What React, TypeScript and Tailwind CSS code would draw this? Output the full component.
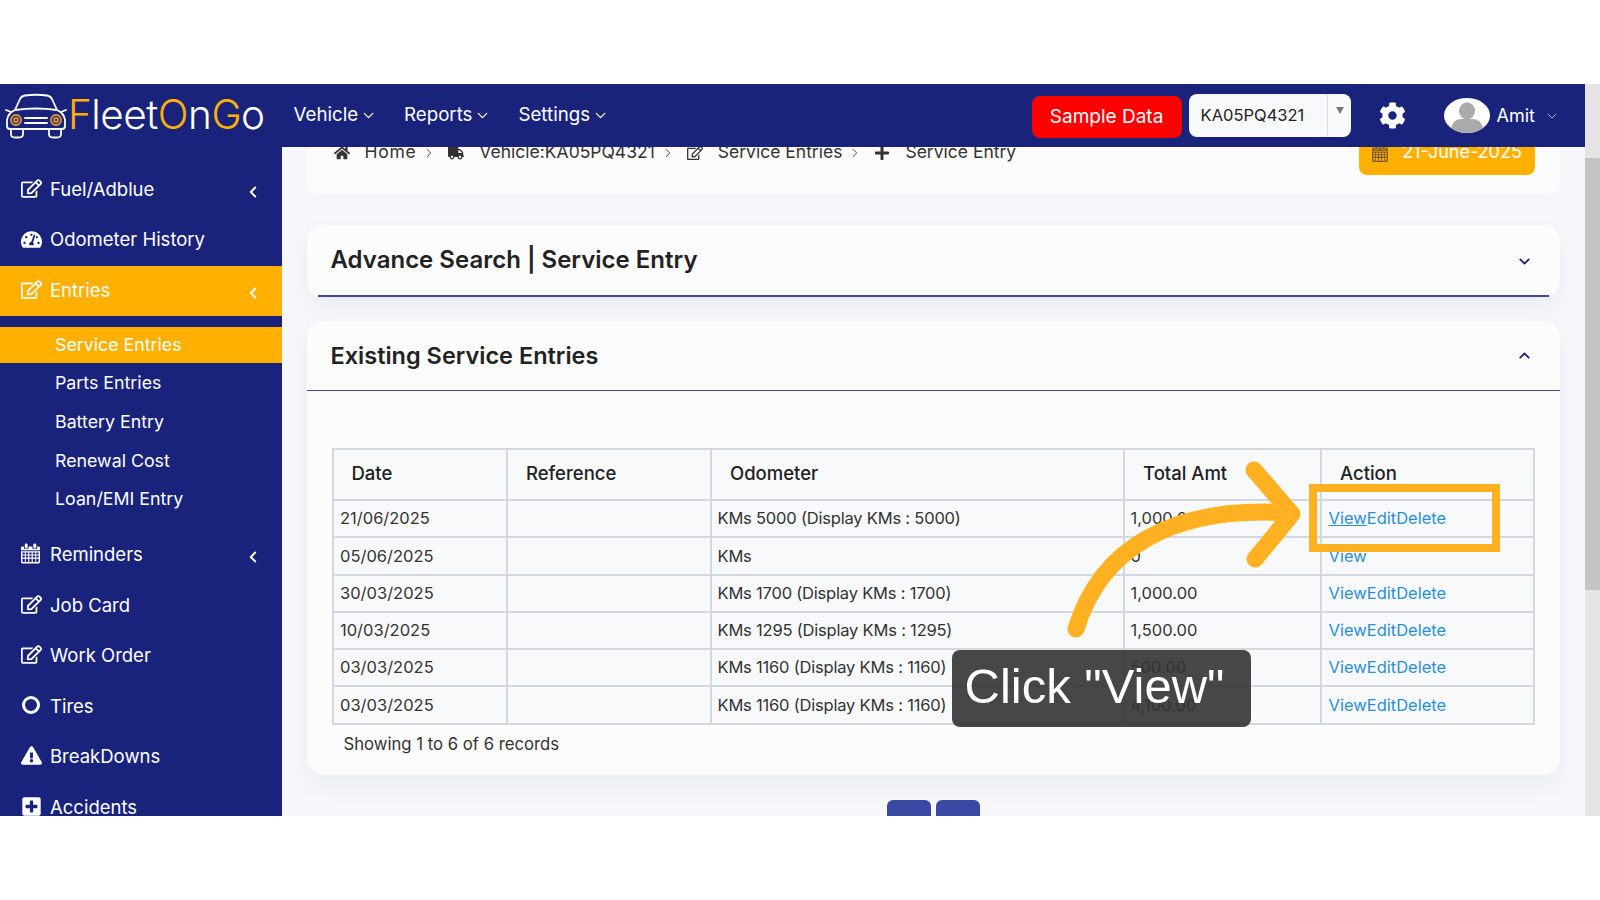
import { ChevronDown, ChevronLeft, ChevronRight, ChevronUp } from 'lucide-react'
import {
  FaCog,
  FaExclamationTriangle,
  FaHome,
  FaPlus,
  FaPlusSquare,
  FaRegEdit,
  FaTachometerAlt,
  FaTruck,
} from 'react-icons/fa'
import type { ReactNode } from 'react'

const rows = [
  { date: '21/06/2025', odo: 'KMs 5000 (Display KMs : 5000)', total: '1,000.00', full: true, active: true },
  { date: '05/06/2025', odo: 'KMs', total: '0', full: false, active: false },
  { date: '30/03/2025', odo: 'KMs 1700 (Display KMs : 1700)', total: '1,000.00', full: true, active: false },
  { date: '10/03/2025', odo: 'KMs 1295 (Display KMs : 1295)', total: '1,500.00', full: true, active: false },
  { date: '03/03/2025', odo: 'KMs 1160 (Display KMs : 1160)', total: '500.00', full: true, active: false },
  { date: '03/03/2025', odo: 'KMs 1160 (Display KMs : 1160)', total: '4,100.00', full: true, active: false },
]

function CarLogo() {
  return (
    <svg viewBox="0 0 62 46" className="h-[46px] w-[62px] shrink-0" fill="none" stroke="#fff" strokeWidth="1.8" strokeLinecap="round" strokeLinejoin="round">
      <path d="M10 17 L15 6 Q16.500 3 20 2.500 Q31 1 42 2.500 Q45.500 3 47 6 L52 17" />
      <path d="M10 17 Q3 20 2 27 L2 33 Q2 36 5 36 L57 36 Q60 36 60 33 L60 27 Q59 20 52 17 Q31 14 10 17 Z" />
      <path d="M6 36 L6 41 Q6 44.500 10 44.500 L14 44.500 Q18 44.500 18 41 L18 36" />
      <path d="M44 36 L44 41 Q44 44.500 48 44.500 L52 44.500 Q56 44.500 56 41 L56 36" />
      <path d="M1 17 L6 19 M61 17 L56 19" />
      <path d="M20 25 L42 25 M20 30 L42 30" />
      <circle cx="11" cy="27" r="5" stroke="#e0962a" strokeDasharray="1.500 1" />
      <circle cx="11" cy="27" r="2" stroke="#e0962a" />
      <circle cx="51" cy="27" r="5" stroke="#e0962a" strokeDasharray="1.500 1" />
      <circle cx="51" cy="27" r="2" stroke="#e0962a" />
    </svg>
  )
}

// fa-calendar from the old icon font: rings on top, grid of cells below
function CalendarGrid({ className }: { className?: string }) {
  return (
    <svg viewBox="0 0 20 21" className={className} fill="currentColor">
      <rect x="4" y="0" width="3" height="5" rx="1.200" />
      <rect x="13" y="0" width="3" height="5" rx="1.200" />
      <path d="M1.500 3 H3 V5.500 H8 V3 H12 V5.500 H17 V3 H18.500 Q20 3 20 4.500 V7 H0 V4.500 Q0 3 1.500 3 Z" />
      <path fillRule="evenodd" d="M0 8 H20 V19.500 Q20 21 18.500 21 H1.500 Q0 21 0 19.500 Z M1.500 9.500 V11.500 H4 V9.500 Z M5 9.500 V11.500 H7.500 V9.500 Z M8.700 9.500 V11.500 H11.200 V9.500 Z M12.400 9.500 V11.500 H15 V9.500 Z M16 9.500 V11.500 H18.500 V9.500 Z M1.500 12.700 V14.700 H4 V12.700 Z M5 12.700 V14.700 H7.500 V12.700 Z M8.700 12.700 V14.700 H11.200 V12.700 Z M12.400 12.700 V14.700 H15 V12.700 Z M16 12.700 V14.700 H18.500 V12.700 Z M1.500 16 V18 Q1.500 19.500 2.500 19.500 H4 V16 Z M5 16 V19.500 H7.500 V16 Z M8.700 16 V19.500 H11.200 V16 Z M12.400 16 V19.500 H15 V16 Z M16 16 V19.500 H17.500 Q18.500 19.500 18.500 18 V16 Z" />
    </svg>
  )
}

function NavLink({ label }: { label: string }) {
  return (
    <div className="flex items-center gap-[2px] text-[18.7px] text-white">
      {label}
      <ChevronDown className="h-[17px] w-[17px]" strokeWidth={1.8} />
    </div>
  )
}

function SideItem({ icon, label, arrow, active }: { icon: ReactNode; label: string; arrow?: boolean; active?: boolean }) {
  return (
    <div className={`flex h-[50.500px] items-center pl-[21px] pr-[20px] text-[18.500px] text-white ${active ? 'bg-[#ffb000]' : ''}`}>
      <span className="flex w-[29px] shrink-0 -translate-y-[1px] text-[21px]">{icon}</span>
      <span className="flex-1">{label}</span>
      {arrow && <ChevronLeft className="mt-1 h-[18px] w-[18px]" strokeWidth={2.5} />}
    </div>
  )
}

function SubItem({ label, active }: { label: string; active?: boolean }) {
  return (
    <div className={`flex items-center pl-[55px] text-[17.800px] text-white ${active ? 'mb-[1px] h-[36px] bg-[#ffb000]' : 'h-[38.800px]'}`}>
      {label}
    </div>
  )
}

function Crumb({ icon, label, last, spaced }: { icon: ReactNode; label: string; last?: boolean; spaced?: boolean }) {
  return (
    <div className="flex items-center">
      <span className="flex w-[31px] shrink-0 text-[16px]">{icon}</span>
      <span className={spaced ? 'tracking-[0.7px]' : ''}>{label}</span>
      {!last && <ChevronRight className="ml-[6px] mr-[12px] h-[14px] w-[14px]" strokeWidth={1.5} />}
    </div>
  )
}

function Sidebar() {
  return (
    <aside className="h-full w-[281.500px] shrink-0 overflow-hidden bg-[#19237c] pt-[17.500px]">
      <SideItem icon={<FaRegEdit />} label="Fuel/Adblue" arrow />
      <SideItem icon={<FaTachometerAlt />} label="Odometer History" />
      <SideItem icon={<FaRegEdit />} label="Entries" arrow active />
      <div className="mb-[10.500px] mt-[11px]">
        <SubItem label="Service Entries" active />
        <SubItem label="Parts Entries" />
        <SubItem label="Battery Entry" />
        <SubItem label="Renewal Cost" />
        <SubItem label="Loan/EMI Entry" />
      </div>
      <SideItem icon={<CalendarGrid className="h-[21px] w-[19px]" />} label="Reminders" arrow />
      <SideItem icon={<FaRegEdit />} label="Job Card" />
      <SideItem icon={<FaRegEdit />} label="Work Order" />
      <SideItem icon={<span className="ml-[1px] h-[18px] w-[18px] rounded-full border-[3.500px] border-white" />} label="Tires" />
      <SideItem icon={<FaExclamationTriangle />} label="BreakDowns" />
      <SideItem icon={<FaPlusSquare />} label="Accidents" />
    </aside>
  )
}

function TopNav() {
  return (
    <header className="flex h-[63px] shrink-0 items-center bg-[#19237c]">
      <div className="ml-[5px] flex items-center">
        <CarLogo />
        <div className="ml-[1px] text-[40.5px] font-light leading-none tracking-[-0.5px] text-white">
          <span className="text-[#ffb000]">F</span>leet<span className="text-[#ffb000]">O</span>n<span className="text-[#ffb000]">G</span>o
        </div>
      </div>
      <div className="ml-[29px] flex items-center gap-[27px]">
        <NavLink label="Vehicle" />
        <NavLink label="Reports" />
        <NavLink label="Settings" />
      </div>
      <div className="ml-auto mt-[3px] flex h-[42px] w-[150px] items-center justify-center rounded-lg bg-[#ff0000] text-[19px] text-white">
        Sample Data
      </div>
      <div className="ml-[7px] flex h-[43px] w-[162px] items-center rounded-lg bg-[#f8f9fb]">
        <span className="flex-1 pl-[12px] text-[16.5px] text-[#222]">KA05PQ4321</span>
        <div className="flex h-full w-[24px] items-start justify-center border-l border-[#d9dce3] pl-[2px] pt-[13px]">
          <span className="h-0 w-0 border-x-[4px] border-t-[7px] border-x-transparent border-t-[#777]" />
        </div>
      </div>
      <FaCog className="ml-[28px] text-[27px] text-white" />
      <svg viewBox="0 0 46 35" preserveAspectRatio="none" className="ml-[38px] h-[35px] w-[46px] shrink-0">
        <ellipse cx="23" cy="17.500" rx="23" ry="17.500" fill="#fff" />
        <ellipse cx="23" cy="13" rx="8" ry="8.500" fill="#aaa" />
        <path d="M7 30 Q9 21 18 21 L28 21 Q37 21 39 30 Q32 35 23 35 Q14 35 7 30 Z" fill="#aaa" />
      </svg>
      <span className="ml-[7px] text-[18px] text-white">Amit</span>
      <ChevronDown className="ml-[9px] mr-[25px] h-4 w-4 text-[#aab0d8]" strokeWidth={1.5} />
    </header>
  )
}

function EntriesTable() {
  return (
    <table className="w-[1203.500px] table-fixed border-collapse bg-[#f8f9fb] text-[16.500px] text-[#333]">
      <colgroup>
        <col className="w-[174.500px]" />
        <col className="w-[204px]" />
        <col className="w-[413px]" />
        <col className="w-[197px]" />
        <col />
      </colgroup>
      <thead>
        <tr className="h-[51.500px] text-left text-[18.500px] font-medium text-[#222]">
          <th className="border-2 border-[#d3d7e0] pl-[18px] font-medium">Date</th>
          <th className="border-2 border-[#d3d7e0] pl-[18px] font-medium">Reference</th>
          <th className="border-2 border-[#d3d7e0] pl-[18px] font-medium">Odometer</th>
          <th className="border-2 border-[#d3d7e0] pl-[18px] font-medium">Total Amt</th>
          <th className="border-2 border-[#d3d7e0] pl-[18px] font-medium">Action</th>
        </tr>
      </thead>
      <tbody>
        {rows.map((row, i) => (
          <tr key={i} className="h-[37.300px]">
            <td className="border-2 border-[#d3d7e0] pl-[6.500px]">{row.date}</td>
            <td className="border-2 border-[#d3d7e0]" />
            <td className="border-2 border-[#d3d7e0] pl-[5.500px] tracking-[-0.2px]">{row.odo}</td>
            <td className="border-2 border-[#d3d7e0] pl-[5.500px]">{row.total}</td>
            <td className="border-2 border-[#d3d7e0] pl-[6.500px] text-[#2a8fd8]">
              <span className={row.active ? 'underline' : ''}>View</span>
              {row.full && 'EditDelete'}
            </td>
          </tr>
        ))}
      </tbody>
    </table>
  )
}

function Overlays() {
  return (
    <>
      <svg viewBox="0 0 1600 900" className="pointer-events-none absolute left-0 top-0 h-[900px] w-[1600px]" fill="none" stroke="#ffb122" strokeLinecap="round" strokeLinejoin="round">
        <path d="M1076 629 C1100 550 1170 505 1290 513" strokeWidth="17" />
        <path d="M1254 470 L1292 514 L1255 559" strokeWidth="17" />
      </svg>
      <div className="absolute left-[1309px] top-[484px] h-[68px] w-[191px] border-8 border-[#ffb122]" />
      <div className="absolute left-[952px] top-[650px] flex h-[77px] w-[299px] items-center justify-center rounded-lg bg-[#333333]/90 pb-[5px] pr-[14px] font-['Liberation_Sans',sans-serif] text-[49px] leading-none text-white">
        Click "View"
      </div>
    </>
  )
}

export default function App() {
  return (
    <div className="relative h-[900px] w-[1600px] overflow-hidden bg-white font-['Inter',sans-serif]">
      <div className="h-[84px]" />
      <div className="flex h-[732px]">
        <div className="flex min-w-0 flex-1 flex-col">
          <TopNav />
          <div className="flex min-h-0 flex-1">
            <Sidebar />
            <main className="min-w-0 flex-1 overflow-hidden bg-[#f6f7fa] px-[25px]">
              <div className="relative z-0 -mt-[40px] flex h-[87px] items-start justify-between rounded-xl bg-[#fcfcfd] pl-[27px] pr-[25px] pt-[33px] text-[17.500px] text-[#333]">
                <div className="flex h-[25px] items-center">
                  <Crumb icon={<FaHome />} label="Home" spaced />
                  <Crumb icon={<FaTruck />} label="Vehicle:KA05PQ4321" />
                  <Crumb icon={<FaRegEdit />} label="Service Entries" />
                  <Crumb icon={<FaPlus />} label="Service Entry" last />
                </div>
                <div className="-mt-[33px] flex h-[68px] w-[176px] items-end justify-center gap-[14px] rounded-b-lg bg-[#ffb000] pb-[10px] text-[18px] text-white">
                  <CalendarGrid className="mb-[3px] h-[17px] w-[16px] text-[#7a5a2a]" />
                  21-June-2025
                </div>
              </div>

              <section className="mt-[31px] rounded-2xl bg-[#fcfcfd] shadow-[0_10px_24px_rgba(30,40,90,0.05)]">
                <div className="flex h-[70px] items-center justify-between pl-[24px] pr-[27px] text-[24px] font-semibold text-[#222]">
                  Advance Search | Service Entry
                  <ChevronDown className="mt-[3px] h-[17px] w-[17px] text-[#19237c]" strokeWidth={2.5} />
                </div>
                <div className="mx-[11px] h-[1.500px] bg-[#3f4a9f]" />
              </section>

              <section className="mt-[24.500px] h-[454px] rounded-2xl bg-[#fcfcfd] shadow-[0_10px_24px_rgba(30,40,90,0.05)]">
                <div className="flex h-[69.500px] items-center justify-between border-b-[1.500px] border-[#3f4a9f] pl-[24px] pr-[27px] text-[23.5px] font-semibold text-[#222]">
                  Existing Service Entries
                  <ChevronUp className="h-[17px] w-[17px] text-[#19237c]" strokeWidth={2.5} />
                </div>
                <div className="pl-[25px] pt-[57px]">
                  <EntriesTable />
                  <div className="pl-[12px] pt-[7px] text-[16.700px] text-[#333]">Showing 1 to 6 of 6 records</div>
                </div>
              </section>

              <div className="mt-[24.500px] flex justify-center gap-[5px]">
                <div className="h-[30px] w-[44px] rounded-md bg-[#3949a3]" />
                <div className="h-[30px] w-[44px] rounded-md bg-[#3949a3]" />
              </div>
            </main>
          </div>
        </div>
        <div className="flex w-[15px] shrink-0 flex-col bg-[#e4e4e4]">
          <div className="h-[74px]" />
          <div className="h-[432px] bg-[#c4c4c4]" />
        </div>
      </div>
      <Overlays />
    </div>
  )
}
